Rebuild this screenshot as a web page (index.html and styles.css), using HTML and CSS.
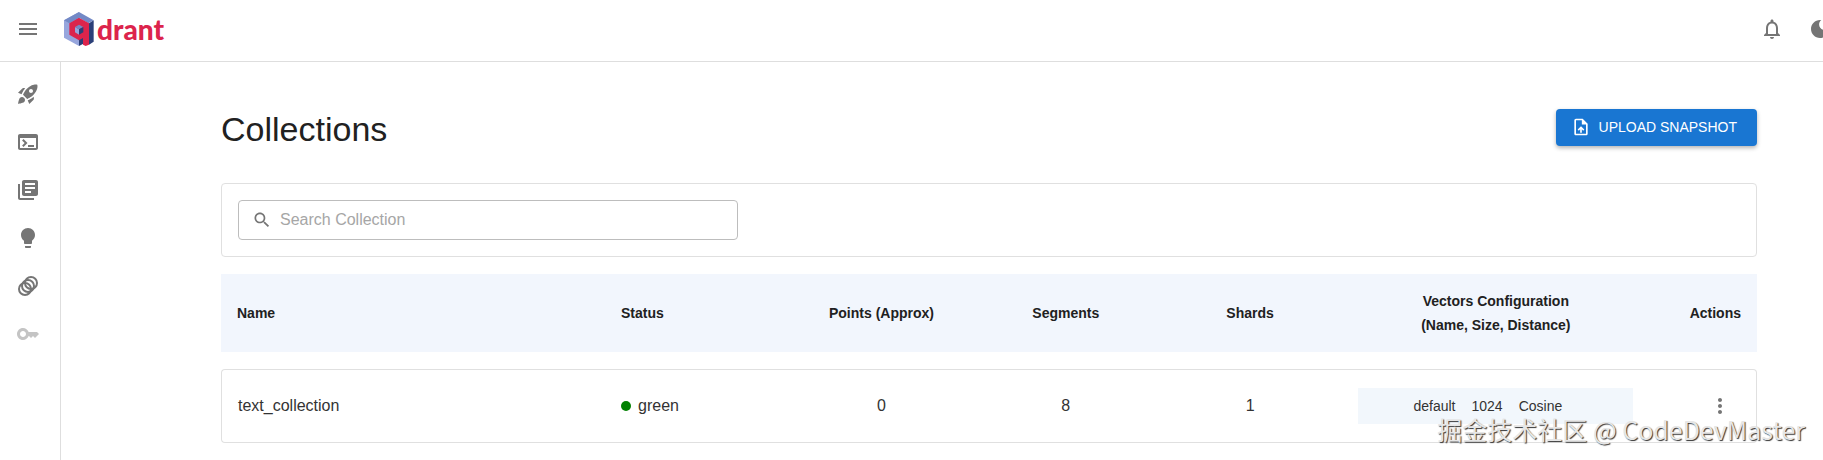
FILE: index.html
```html
<!DOCTYPE html>
<html lang="en">
<head>
<meta charset="utf-8">
<title>Qdrant – Collections</title>
<link rel="stylesheet" href="styles.css">
</head>
<body>
<div class="app">
  <header class="topbar">
    <button class="icon-button" type="button" aria-label="Menu">
      <svg class="icon" viewBox="0 0 24 24"><path d="M3 18h18v-2H3v2zm0-5h18v-2H3v2zm0-7v2h18V6H3z"/></svg>
    </button>
    <a class="logo" href="#" aria-label="Qdrant">
      <svg class="logo-mark" viewBox="0 0 90 102">
        <path fill="#97a6dd" d="M45 0 0 25v52l45 25z"/>
        <path fill="#7389c6" d="M45 0 0 25l16 9 29-17 28 17 16-9z"/>
        <path fill="#2b3f78" d="M89 25 75 34v64l14-9z"/>
        <path fill="#2b3f78" d="M45 78v24l13-7V72z"/>
        <path fill="#dc244c" d="M45 17 16 34v34l29 17 12-7v20l8 4 10-4V34z"/>
        <path fill="#97a6dd" d="M45 52 33 45v16l12 7z"/>
        <path fill="#7389c6" d="m33 45 12-7 13 7-13 7z"/>
        <path fill="#2b3f78" d="m45 52 13-7v16l-13 7z"/>
      </svg>
      <span class="logo-text">drant</span>
    </a>
    <div class="topbar-actions">
      <button class="icon-button" type="button" aria-label="Notifications">
        <svg class="icon" viewBox="0 0 24 24"><path d="M12 22c1.100 0 2-.9 2-2h-4c0 1.100.9 2 2 2zm6-6v-5c0-3.070-1.630-5.640-4.500-6.320V4c0-.83-.67-1.500-1.500-1.500s-1.500.67-1.500 1.500v.68C7.640 5.360 6 7.920 6 11v5l-2 2v1h16v-1l-2-2zm-2 1H8v-6c0-2.480 1.510-4.500 4-4.500s4 2.020 4 4.500v6z"/></svg>
      </button>
      <button class="icon-button" type="button" aria-label="Dark mode">
        <svg class="icon" viewBox="0 0 24 24"><path d="M12 3c-4.970 0-9 4.030-9 9s4.030 9 9 9 9-4.030 9-9c0-.46-.04-.92-.1-1.360-.98 1.370-2.580 2.260-4.400 2.260-2.980 0-5.400-2.420-5.400-5.400 0-1.810.89-3.420 2.260-4.400-.44-.06-.9-.1-1.360-.1z"/></svg>
      </button>
    </div>
  </header>
  <div class="body">
    <nav class="sidebar" aria-label="Main">
      <a class="nav-item" href="#" aria-label="Welcome"><svg class="icon" viewBox="0 0 24 24"><path d="M9.190 6.350c-2.040 2.290-3.440 5.580-3.570 5.890L2 10.690l4.050-4.050c.47-.47 1.150-.68 1.810-.55l1.330.26zM11.170 17s3.740-1.550 5.890-3.700c5.400-5.400 4.500-9.620 4.210-10.570-.95-.3-5.170-1.190-10.570 4.210C8.550 9.090 7 12.830 7 12.830L11.170 17zm6.480-2.190c-2.290 2.040-5.580 3.440-5.890 3.570L13.310 22l4.050-4.050c.47-.47.68-1.150.55-1.810l-.26-1.330zM9 18c0 .83-.34 1.580-.88 2.120C6.940 21.300 2 22 2 22s.7-4.940 1.880-6.120C4.420 15.340 5.170 15 6 15c1.660 0 3 1.340 3 3zm4-9c0-1.100.9-2 2-2s2 .9 2 2-.9 2-2 2-2-.9-2-2z"/></svg></a>
      <a class="nav-item" href="#" aria-label="Console"><svg class="icon" viewBox="0 0 24 24"><path d="M20 4H4c-1.110 0-2 .9-2 2v12c0 1.100.89 2 2 2h16c1.100 0 2-.9 2-2V6c0-1.100-.89-2-2-2zm0 14H4V8h16v10zm-2-1h-6v-2h6v2zM7.500 17l-1.410-1.410L8.670 13l-2.590-2.590L7.500 9l4 4-4 4z"/></svg></a>
      <a class="nav-item" href="#" aria-label="Collections"><svg class="icon" viewBox="0 0 24 24"><path d="M4 6H2v14c0 1.100.9 2 2 2h14v-2H4V6zm16-4H8c-1.100 0-2 .9-2 2v12c0 1.100.9 2 2 2h12c1.100 0 2-.9 2-2V4c0-1.100-.9-2-2-2zm-1 9H9V9h10v2zm-4 4H9v-2h6v2zm4-8H9V5h10v2z"/></svg></a>
      <a class="nav-item" href="#" aria-label="Tutorial"><svg class="icon" viewBox="0 0 24 24"><path d="M9 21c0 .5.4 1 1 1h4c.6 0 1-.5 1-1v-1H9v1zm3-19C8.100 2 5 5.100 5 9c0 2.400 1.200 4.500 3 5.700V17c0 .5.4 1 1 1h6c.6 0 1-.5 1-1v-2.300c1.800-1.300 3-3.400 3-5.700 0-3.900-3.100-7-7-7z"/></svg></a>
      <a class="nav-item" href="#" aria-label="Datasets"><svg class="icon icon-outline" viewBox="0 0 24 24"><circle cx="9" cy="15" r="6"/><circle cx="12" cy="12" r="6"/><circle cx="15" cy="9" r="6"/></svg></a>
      <a class="nav-item nav-item-disabled" href="#" aria-label="Access tokens" aria-disabled="true"><svg class="icon" viewBox="0 0 24 24"><path d="M21 10h-8.350C11.830 7.670 9.610 6 7 6c-3.310 0-6 2.690-6 6s2.690 6 6 6c2.610 0 4.830-1.670 5.650-4H13l2 2 2-2 2 2 4-4.040L21 10zM7 15c-1.650 0-3-1.350-3-3s1.350-3 3-3 3 1.350 3 3-1.350 3-3 3z"/></svg></a>
    </nav>
    <main class="content">
      <div class="page-head">
        <h1 class="page-title">Collections</h1>
        <button class="upload-button" type="button">
          <svg class="icon-small" viewBox="0 0 24 24"><path d="M14 2H6c-1.100 0-1.990.9-1.990 2L4 20c0 1.100.89 2 1.990 2H18c1.100 0 2-.9 2-2V8l-6-6zm4 18H6V4h7v5h5v11zM8 15.010l1.410 1.410L11 14.840V19h2v-4.160l1.590 1.590L16 15.010 12.010 11z"/></svg>
          UPLOAD SNAPSHOT
        </button>
      </div>
      <section class="search-card">
        <label class="search-field">
          <svg class="icon-small" viewBox="0 0 24 24"><path d="M15.500 14h-.79l-.28-.27C15.410 12.590 16 11.110 16 9.500 16 5.910 13.090 3 9.500 3S3 5.910 3 9.500 5.910 16 9.500 16c1.610 0 3.090-.59 4.230-1.570l.27.28v.79l5 4.990L20.490 19l-4.990-5zm-6 0C7.010 14 5 11.990 5 9.500S7.010 5 9.500 5 14 7.010 14 9.500 11.990 14 9.500 14z"/></svg>
          <input class="search-input" type="text" placeholder="Search Collection" aria-label="Search Collection">
        </label>
      </section>
      <table class="collections">
        <colgroup>
          <col class="col-name"><col class="col-stat"><col class="col-stat"><col class="col-stat"><col class="col-stat"><col class="col-vectors"><col class="col-actions">
        </colgroup>
        <thead>
          <tr>
            <th class="start" scope="col">Name</th>
            <th class="start" scope="col">Status</th>
            <th scope="col">Points (Approx)</th>
            <th scope="col">Segments</th>
            <th scope="col">Shards</th>
            <th scope="col">Vectors Configuration<br>(Name, Size, Distance)</th>
            <th class="end" scope="col">Actions</th>
          </tr>
        </thead>
        <tbody>
          <tr>
            <td class="start"><a class="collection-link" href="#">text_collection</a></td>
            <td class="start"><span class="status"><span class="status-dot"></span>green</span></td>
            <td>0</td>
            <td>8</td>
            <td>1</td>
            <td><div class="vector"><span>default</span><span>1024</span><span>Cosine</span></div></td>
            <td class="end">
              <button class="icon-button" type="button" aria-label="Collection actions">
                <svg class="icon" viewBox="0 0 24 24"><path d="M12 8c1.100 0 2-.9 2-2s-.9-2-2-2-2 .9-2 2 .9 2 2 2zm0 2c-1.100 0-2 .9-2 2s.9 2 2 2 2-.9 2-2-.9-2-2-2zm0 6c-1.100 0-2 .9-2 2s.9 2 2 2 2-.9 2-2-.9-2-2-2z"/></svg>
              </button>
            </td>
          </tr>
        </tbody>
      </table>
    </main>
  </div>
  <div class="watermark">掘金技术社区 @ CodeDevMaster</div>
</div>
</body>
</html>
```
FILE: styles.css
```css
* {
  box-sizing: border-box;
}

body {
  margin: 0;
  background: #fff;
  color: #212121;
  font-family: "Liberation Sans", Arial, sans-serif;
  font-size: 16px;
  line-height: 24px;
}

.app {
  position: relative;
  display: flex;
  flex-direction: column;
  min-height: 100vh;
  overflow: hidden;
}

.icon {
  display: block;
  width: 24px;
  height: 24px;
  fill: currentColor;
}

.icon-outline {
  fill: none;
  stroke: currentColor;
  stroke-width: 2;
}

.icon-small {
  flex: none;
  width: 20px;
  height: 20px;
  fill: currentColor;
}

.icon-button {
  display: inline-flex;
  padding: 8px;
  border: 0;
  border-radius: 50%;
  background: none;
  color: #757575;
  cursor: pointer;
}

.topbar {
  display: flex;
  align-items: center;
  padding: 9px 0 12px 8px;
  border-bottom: 1px solid #dedede;
}

.logo {
  display: flex;
  align-items: center;
  gap: 3px;
  margin-left: 16px;
  color: #dc244c;
  text-decoration: none;
}

.logo-mark {
  width: 30px;
  height: 34px;
}

.logo-text {
  font: 900 28px/38px Lato, sans-serif;
}

.topbar-actions {
  display: flex;
  gap: 8px;
  margin-left: auto;
  margin-right: -17px;
}

.body {
  display: flex;
  flex: 1;
}

.sidebar {
  flex: none;
  width: 61px;
  padding-top: 8px;
  border-right: 1px solid #dedede;
}

.nav-item {
  display: block;
  padding: 12px 16px;
  color: #757575;
}

.nav-item-disabled {
  color: #c4c4c4;
}

.content {
  flex: 1;
  padding: 47px 66px 0 160px;
}

.page-head {
  display: flex;
  align-items: flex-start;
  justify-content: space-between;
  margin-bottom: 34px;
}

.page-title {
  margin: 0;
  font-size: 34px;
  font-weight: 400;
  line-height: 40px;
}

.upload-button {
  display: flex;
  align-items: center;
  gap: 8px;
  padding: 6px 20px 7px 15px;
  border: 0;
  border-radius: 4px;
  background: #1976d2;
  box-shadow: 0 2px 4px rgba(0, 0, 0, 0.3);
  color: #fff;
  font: 500 14px/24px "Liberation Sans", Arial, sans-serif;
  cursor: pointer;
}

.search-card {
  padding: 16px;
  border: 1px solid #e0e0e0;
  border-radius: 4px;
}

.search-field {
  display: flex;
  align-items: center;
  gap: 8px;
  width: 500px;
  max-width: 100%;
  height: 40px;
  padding: 0 13px;
  border: 1px solid #bdbdbd;
  border-radius: 4px;
  color: #757575;
}

.search-input {
  flex: 1;
  min-width: 0;
  padding: 0;
  border: 0;
  outline: 0;
  background: none;
  color: #212121;
  font: inherit;
}

.search-input::placeholder {
  color: #a6a6a6;
  opacity: 1;
}

.collections {
  width: 100%;
  table-layout: fixed;
  border-collapse: separate;
  border-spacing: 0 16px;
}

.col-name {
  width: 25%;
}

.col-stat {
  width: 12%;
}

.col-vectors {
  width: 20%;
}

.col-actions {
  width: 7%;
}

.collections th,
.collections td {
  padding: 15px 16px;
  border: 0 solid #e0e0e0;
  border-width: 1px 0;
  text-align: center;
}

.collections th {
  border-color: #fff;
  background: #f2f6fd;
  font-size: 14px;
  font-weight: 700;
}

.collections td {
  height: 74px;
  color: #333;
}

.collections .start {
  text-align: left;
}

.collections .end {
  text-align: right;
}

.collections td:first-child {
  border-left-width: 1px;
  border-radius: 4px 0 0 4px;
}

.collections td:last-child {
  border-right-width: 1px;
  border-radius: 0 4px 4px 0;
}

.collections .icon-button {
  vertical-align: middle;
}

.collection-link {
  color: inherit;
  text-decoration: none;
}

.status {
  display: flex;
  align-items: center;
  gap: 7px;
}

.status-dot {
  width: 10px;
  height: 10px;
  border-radius: 50%;
  background: #008000;
}

.vector {
  display: flex;
  justify-content: center;
  gap: 16px;
  padding: 6px 16px 6px 0;
  background: #f2f7fc;
  font-size: 14px;
}

.watermark {
  position: absolute;
  right: 18px;
  bottom: 13px;
  color: #e6e6e6;
  font: 25px/36px "Noto Sans CJK SC", sans-serif;
  text-shadow: 1px 1px 1px #333;
  pointer-events: none;
}
```
